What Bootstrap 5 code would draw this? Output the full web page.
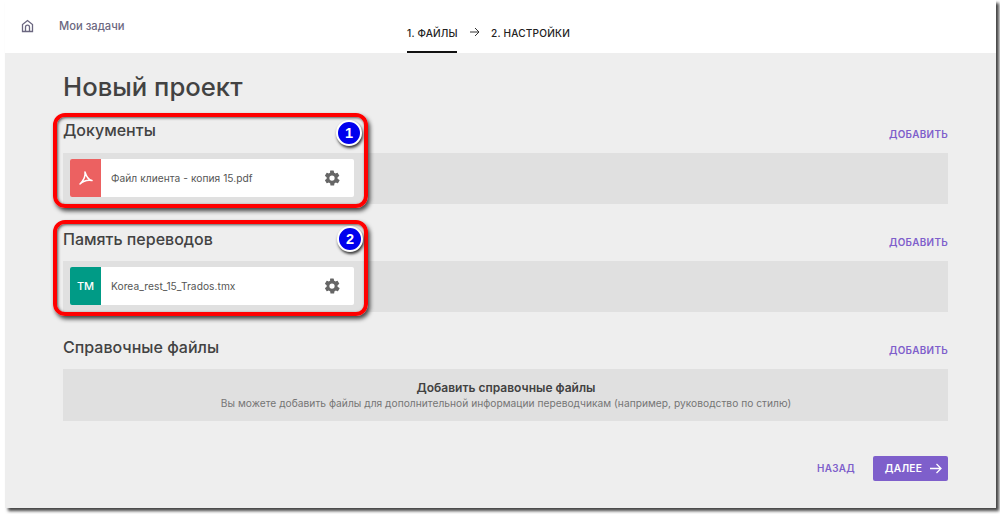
<!DOCTYPE html>
<html lang="ru"><head><meta charset="utf-8"><title>Новый проект</title>
<link href="https://cdn.jsdelivr.net/npm/bootstrap@5.3.0/dist/css/bootstrap.min.css" rel="stylesheet">
<style>
html,body{height:100%;overflow:hidden}
body{background:#fff;font-family:Inter,"Noto Sans",sans-serif;color:#424242}
.frame{margin-left:5px;width:991px;height:508px;background:#eee;box-shadow:3px 3px 3px #444;position:relative}
.topbar{height:53px;background:#fff}
.home-cell{width:44px;padding:19px 0 0 16px}
.home-cell svg{display:block}
.tasks{padding:19px 0 0 10px;font-size:11.2px;font-weight:500;color:#6b6780;line-height:15px;width:280px}
.steps{margin-left:78px;font-size:10.1px;font-weight:500;color:#212121;letter-spacing:.2px}
.step{height:53px;line-height:15px;padding-top:26px}
.step-on{border-bottom:2px solid #111;width:50px;white-space:nowrap}
.step-arrow{width:34px;padding-top:27px;padding-left:13px}
.step-arrow svg{display:block}
.body-pad{padding:0 48px 0 58px}
.title{font-size:25.7px;font-weight:500;line-height:32px;margin:18px 0 0;color:#424242}
.sec-head{height:38px;padding-top:5px}
.sec-title{font-size:16px;font-weight:500;line-height:20px;margin:0;color:#424242}
.title-low{padding-top:1px}
.add-link{font-size:9.9px;font-weight:600;color:#7e5fcb;letter-spacing:.3px;text-decoration:none;line-height:14px;padding-top:7px}
.zone{background:#e0e0e0;height:51px;padding:6px 6px 6px 7px}
.zone-third{height:52px;padding-top:11px}
.sec-two{margin-top:19px}
.sec-doc{margin-top:12px}
.sec-three{margin-top:19px}
.file-card{width:284px;height:38px;background:#fff;border-radius:2px;overflow:hidden}
.file-ico{width:31px;background:#ec6161;color:#fff}
.file-ico-tm{background:#009b86;font-size:11px;font-weight:500}
.file-name{font-size:10.2px;color:#555;letter-spacing:.05px;padding:1px 0 0 10px}
.gear{margin-right:13px}
.ref-title{font-size:12px;font-weight:600;color:#424242;line-height:15px}
.ref-sub{font-size:10.2px;color:#757575;line-height:14px;margin-top:1px;letter-spacing:.03px}
.footer-row{margin-top:35px;gap:18px}
.back-link{font-size:9.9px;font-weight:600;color:#7e5fcb;letter-spacing:.3px;text-decoration:none}
.next-btn{width:75px;height:25px;background:#7e5fcb;color:#fff;font-size:10.2px;font-weight:600;border-radius:2px;border:0;padding:0 0 0 6px;letter-spacing:.3px}
.callout{position:absolute;left:48px;width:315px;border:4px solid #f00;border-radius:12px;box-shadow:2px 3px 4px #444,inset 1px 1px 3px #555;pointer-events:none}
.callout-a{top:113px;height:95px}
.callout-b{top:220px;height:96px}
.num{position:absolute;width:26px;height:26px;border-radius:50%;background:#00e;border:2px solid #fff;color:#fff;font:700 14.5px/22px "Liberation Sans",sans-serif;text-align:center;box-shadow:1px 2px 3px #333}
.num-a{top:120px;left:331px}
.num-b{top:226px;left:332px}
</style></head><body>
<div class="frame">
<header class="topbar d-flex">
  <div class="home-cell"><svg width="13" height="14" viewBox="0 0 13 14" fill="none" stroke="#6b6780" stroke-width="1.3"><path d="M1.500 12.500V5.600L6.500 1.500l5 4.100v6.900z"/><path d="M4.500 12.500V8.200a2 2 0 0 1 4 0v4.300"/></svg></div>
  <div class="tasks">Мои задачи</div>
  <div class="steps d-flex">
    <div class="step step-on">1. ФАЙЛЫ</div>
    <div class="step-arrow"><svg width="10" height="10" viewBox="0 0 10 10" fill="none" stroke="#333" stroke-width="1"><path d="M0 5h9M5 1l4 4-4 4"/></svg></div>
    <div class="step">2. НАСТРОЙКИ</div>
  </div>
</header>
<main class="body-pad">
  <h1 class="title">Новый проект</h1>
  <section class="sec-doc">
    <div class="sec-head d-flex justify-content-between"><h2 class="sec-title">Документы</h2><a class="add-link" href="#">ДОБАВИТЬ</a></div>
    <div class="zone"><div class="file-card d-flex">
      <div class="file-ico d-flex align-items-center justify-content-center"><svg width="16" height="16" viewBox="0 0 16 16" fill="none" stroke="#fff" stroke-width="1.500" stroke-linecap="round" stroke-linejoin="round"><path d="M7 2c.6 4-1.500 8.500-5 12 3-2.800 8-4.200 12-3.500C11 10 8.500 7 7 2z"/></svg></div>
      <div class="file-name flex-grow-1 d-flex align-items-center">Файл клиента - копия 15.pdf</div>
      <div class="gear d-flex align-items-center"><svg width="18" height="18" viewBox="0 0 24 24" fill="#666"><path fill-rule="evenodd" d="M19.400 13a7.500 7.500 0 0 0 0-2l2.100-1.600a.5.5 0 0 0 .1-.6l-2-3.500a.5.5 0 0 0-.6-.2l-2.500 1a7.500 7.500 0 0 0-1.700-1l-.4-2.600a.5.5 0 0 0-.5-.4h-4a.5.5 0 0 0-.5.4L9.500 5.100a7.500 7.500 0 0 0-1.700 1l-2.500-1a.5.5 0 0 0-.6.2l-2 3.500a.5.5 0 0 0 .1.600L4.900 11a7.500 7.500 0 0 0 0 2l-2.100 1.600a.5.5 0 0 0-.1.600l2 3.500a.5.5 0 0 0 .6.2l2.500-1a7.500 7.500 0 0 0 1.700 1l.4 2.600a.5.5 0 0 0 .5.4h4a.5.5 0 0 0 .5-.4l.4-2.600a7.500 7.500 0 0 0 1.700-1l2.500 1a.5.5 0 0 0 .6-.2l2-3.500a.5.5 0 0 0-.1-.6zM12 15.500a3.500 3.500 0 1 1 0-7 3.500 3.500 0 0 1 0 7z"/></svg></div>
    </div></div>
  </section>
  <section class="sec-two">
    <div class="sec-head d-flex justify-content-between"><h2 class="sec-title title-low">Память переводов</h2><a class="add-link" href="#">ДОБАВИТЬ</a></div>
    <div class="zone"><div class="file-card d-flex">
      <div class="file-ico file-ico-tm d-flex align-items-center justify-content-center">TM</div>
      <div class="file-name flex-grow-1 d-flex align-items-center">Korea_rest_15_Trados.tmx</div>
      <div class="gear d-flex align-items-center"><svg width="18" height="18" viewBox="0 0 24 24" fill="#666"><path fill-rule="evenodd" d="M19.400 13a7.500 7.500 0 0 0 0-2l2.100-1.600a.5.5 0 0 0 .1-.6l-2-3.500a.5.5 0 0 0-.6-.2l-2.500 1a7.500 7.500 0 0 0-1.700-1l-.4-2.600a.5.5 0 0 0-.5-.4h-4a.5.5 0 0 0-.5.4L9.500 5.100a7.500 7.500 0 0 0-1.700 1l-2.500-1a.5.5 0 0 0-.6.2l-2 3.500a.5.5 0 0 0 .1.600L4.900 11a7.500 7.500 0 0 0 0 2l-2.100 1.600a.5.5 0 0 0-.1.600l2 3.500a.5.5 0 0 0 .6.2l2.500-1a7.500 7.500 0 0 0 1.700 1l.4 2.600a.5.5 0 0 0 .5.4h4a.5.5 0 0 0 .5-.4l.4-2.600a7.500 7.500 0 0 0 1.700-1l2.500 1a.5.5 0 0 0 .6-.2l2-3.500a.5.5 0 0 0-.1-.6zM12 15.500a3.500 3.500 0 1 1 0-7 3.500 3.500 0 0 1 0 7z"/></svg></div>
    </div></div>
  </section>
  <section class="sec-three">
    <div class="sec-head d-flex justify-content-between"><h2 class="sec-title title-low">Справочные файлы</h2><a class="add-link" href="#">ДОБАВИТЬ</a></div>
    <div class="zone zone-third text-center">
      <div class="ref-title">Добавить справочные файлы</div>
      <div class="ref-sub">Вы можете добавить файлы для дополнительной информации переводчикам (например, руководство по стилю)</div>
    </div>
  </section>
  <div class="footer-row d-flex justify-content-end align-items-center">
    <a class="back-link" href="#">НАЗАД</a>
    <button class="next-btn btn d-flex align-items-center justify-content-center gap-2" type="button">ДАЛЕЕ <svg width="12" height="11" viewBox="0 0 12 11" fill="none" stroke="#fff" stroke-width="1.300"><path d="M0 5.500h11M6.500 1l4.500 4.500L6.500 10"/></svg></button>
  </div>
</main>
<div class="callout callout-a"></div><div class="callout callout-b"></div>
<div class="num num-a">1</div><div class="num num-b">2</div>
</div>
</body></html>
